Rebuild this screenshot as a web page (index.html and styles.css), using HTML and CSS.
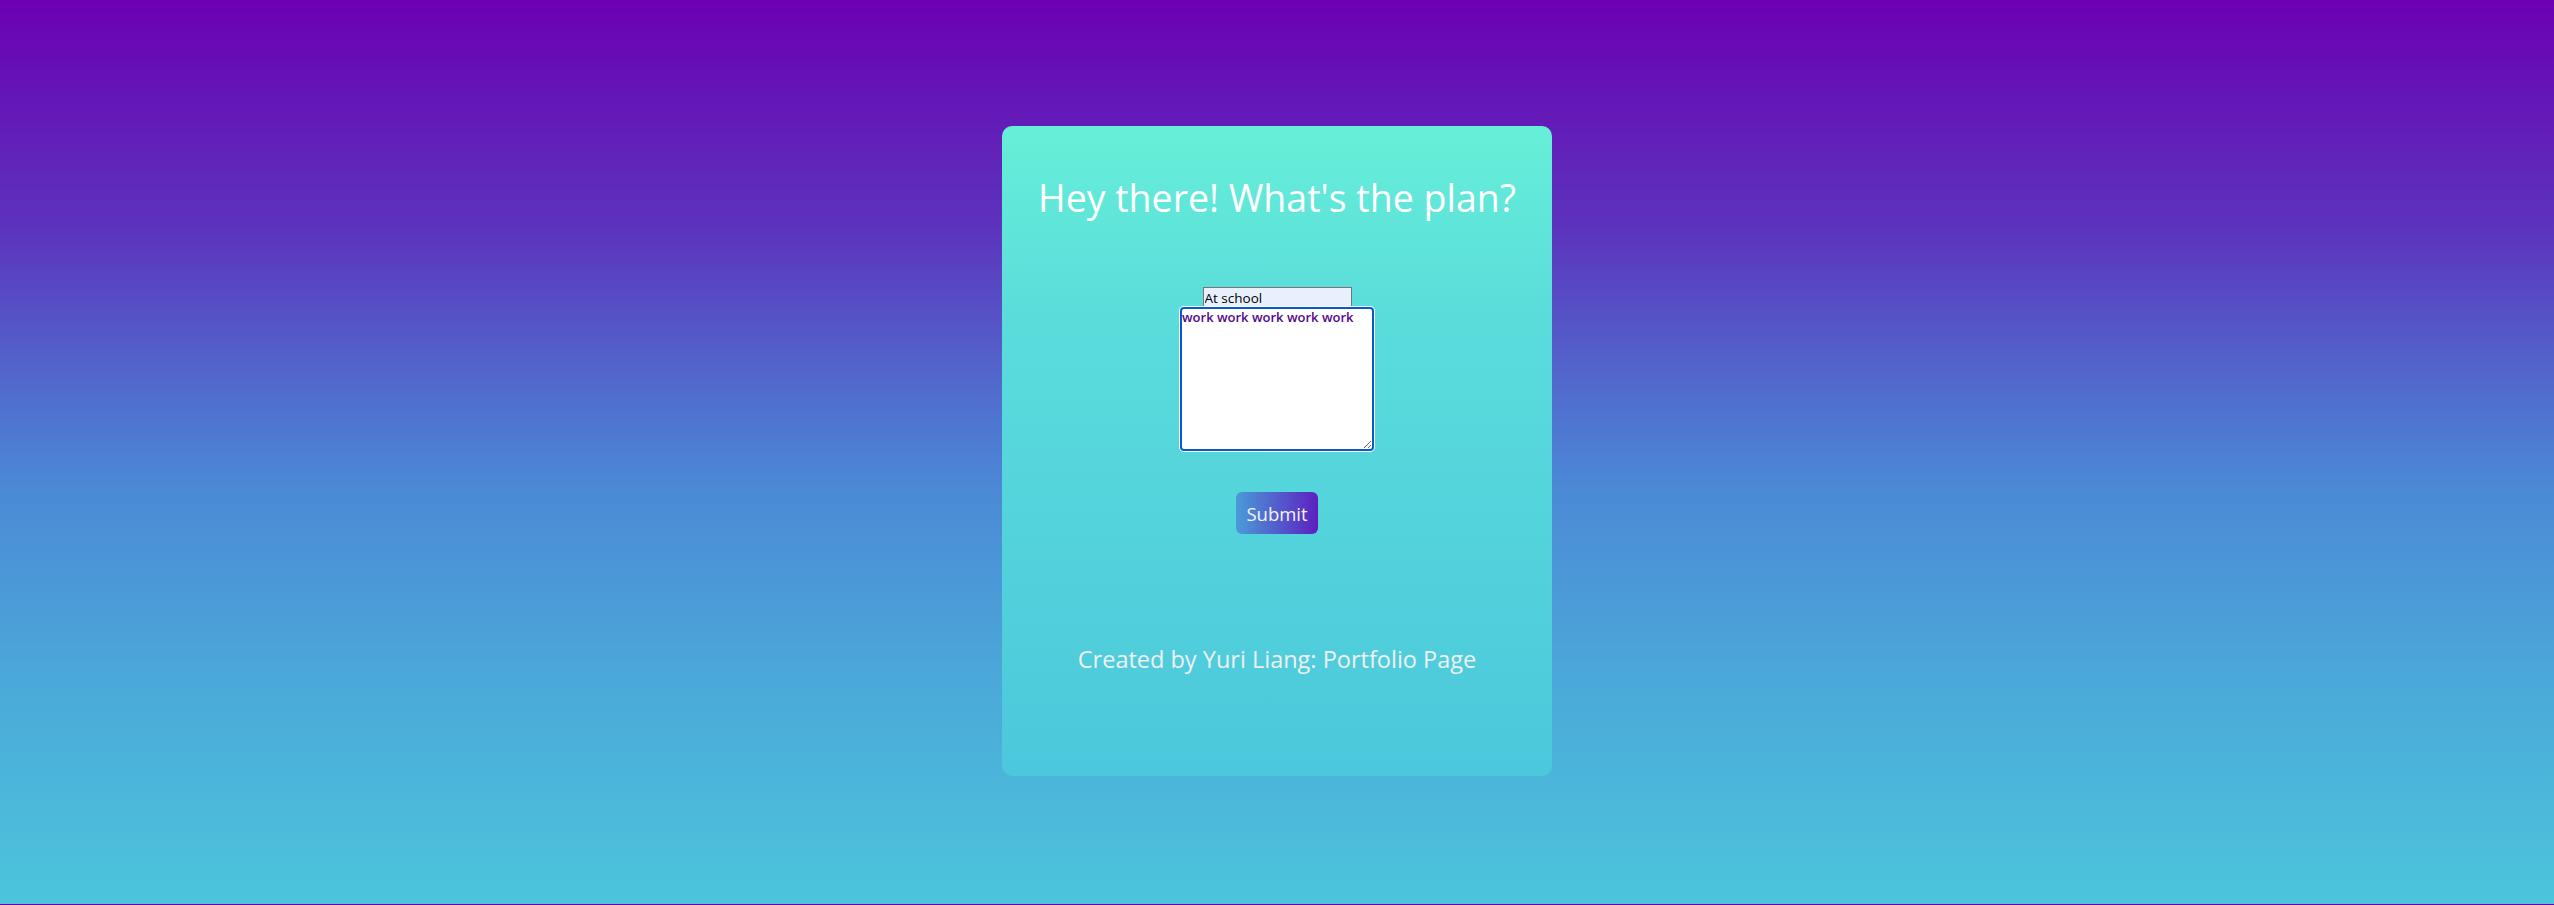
FILE: index.html
```html
<!DOCTYPE html>
<html lang="en">
<head>
<meta charset="utf-8">
<title>Hey there! What's the plan?</title>
<link rel="stylesheet" href="styles.css">
</head>
<body>
<main class="card">
  <h1 class="title">Hey there! What's the plan?</h1>
  <form class="plan-form">
    <input class="where" type="text" value="At school">
    <textarea class="what">work work work work work</textarea>
    <button class="submit" type="button">Submit</button>
  </form>
  <p class="credit">Created by Yuri Liang: Portfolio Page</p>
</main>
</body>
</html>
```
FILE: styles.css
```css
html {
  height: 100%;
  background: linear-gradient(to bottom, #6b00b3 0%, #5c33bd 25%, #5071cf 45%, #4b8bd6 55%, #4ba8d9 75%, #4cc5dc 100%) 0 0 / 100% 904px repeat-y;
}

body {
  margin: 0;
  min-height: 100%;
  font-family: "Open Sans", "Lato", sans-serif;
  display: flex;
  justify-content: center;
  align-items: flex-start;
  padding-top: 126px;
  box-sizing: border-box;
}

.card {
  width: 550px;
  height: 650px;
  border-radius: 10px;
  background: linear-gradient(to bottom, #66efd8 0%, #5adcdb 30%, #4bc8dc 100%);
  display: flex;
  flex-direction: column;
  align-items: center;
  box-sizing: border-box;
  padding-top: 49px;
}

.title {
  margin: 0;
  font-size: 37.5px;
  line-height: 46px;
  font-weight: 400;
  color: #ffffff;
}

.plan-form {
  margin-top: 66px;
  display: flex;
  flex-direction: column;
  align-items: center;
}

.where {
  width: 149px;
  height: 20px;
  box-sizing: border-box;
  margin: 0;
  padding: 0 1px;
  border: 1px solid #767676;
  border-bottom: none;
  background: #e8f0fe;
  font-family: inherit;
  font-size: 13.5px;
  color: #000;
}

.what {
  width: 190px;
  height: 140px;
  box-sizing: border-box;
  margin: 2px 0 0;
  padding: 0;
  border: none;
  border-radius: 2px;
  background: #fff;
  outline: 2px solid #0b57d0;
  box-shadow: 0 0 0 3px #ffffff;
  font-family: inherit;
  font-size: 13px;
  line-height: 17px;
  font-weight: 600;
  color: #52088f;
  resize: both;
}

.submit {
  margin-top: 43px;
  width: 82px;
  height: 42px;
  border: none;
  border-radius: 6px;
  background: linear-gradient(to right, #4a9bd8, #5c20c0);
  color: #f4f4f4;
  font-family: inherit;
  font-size: 18.5px;
  padding: 0;
}

.credit {
  margin: 110px 0 0;
  font-size: 23.5px;
  line-height: 30px;
  color: #f0f0f0;
}
```
